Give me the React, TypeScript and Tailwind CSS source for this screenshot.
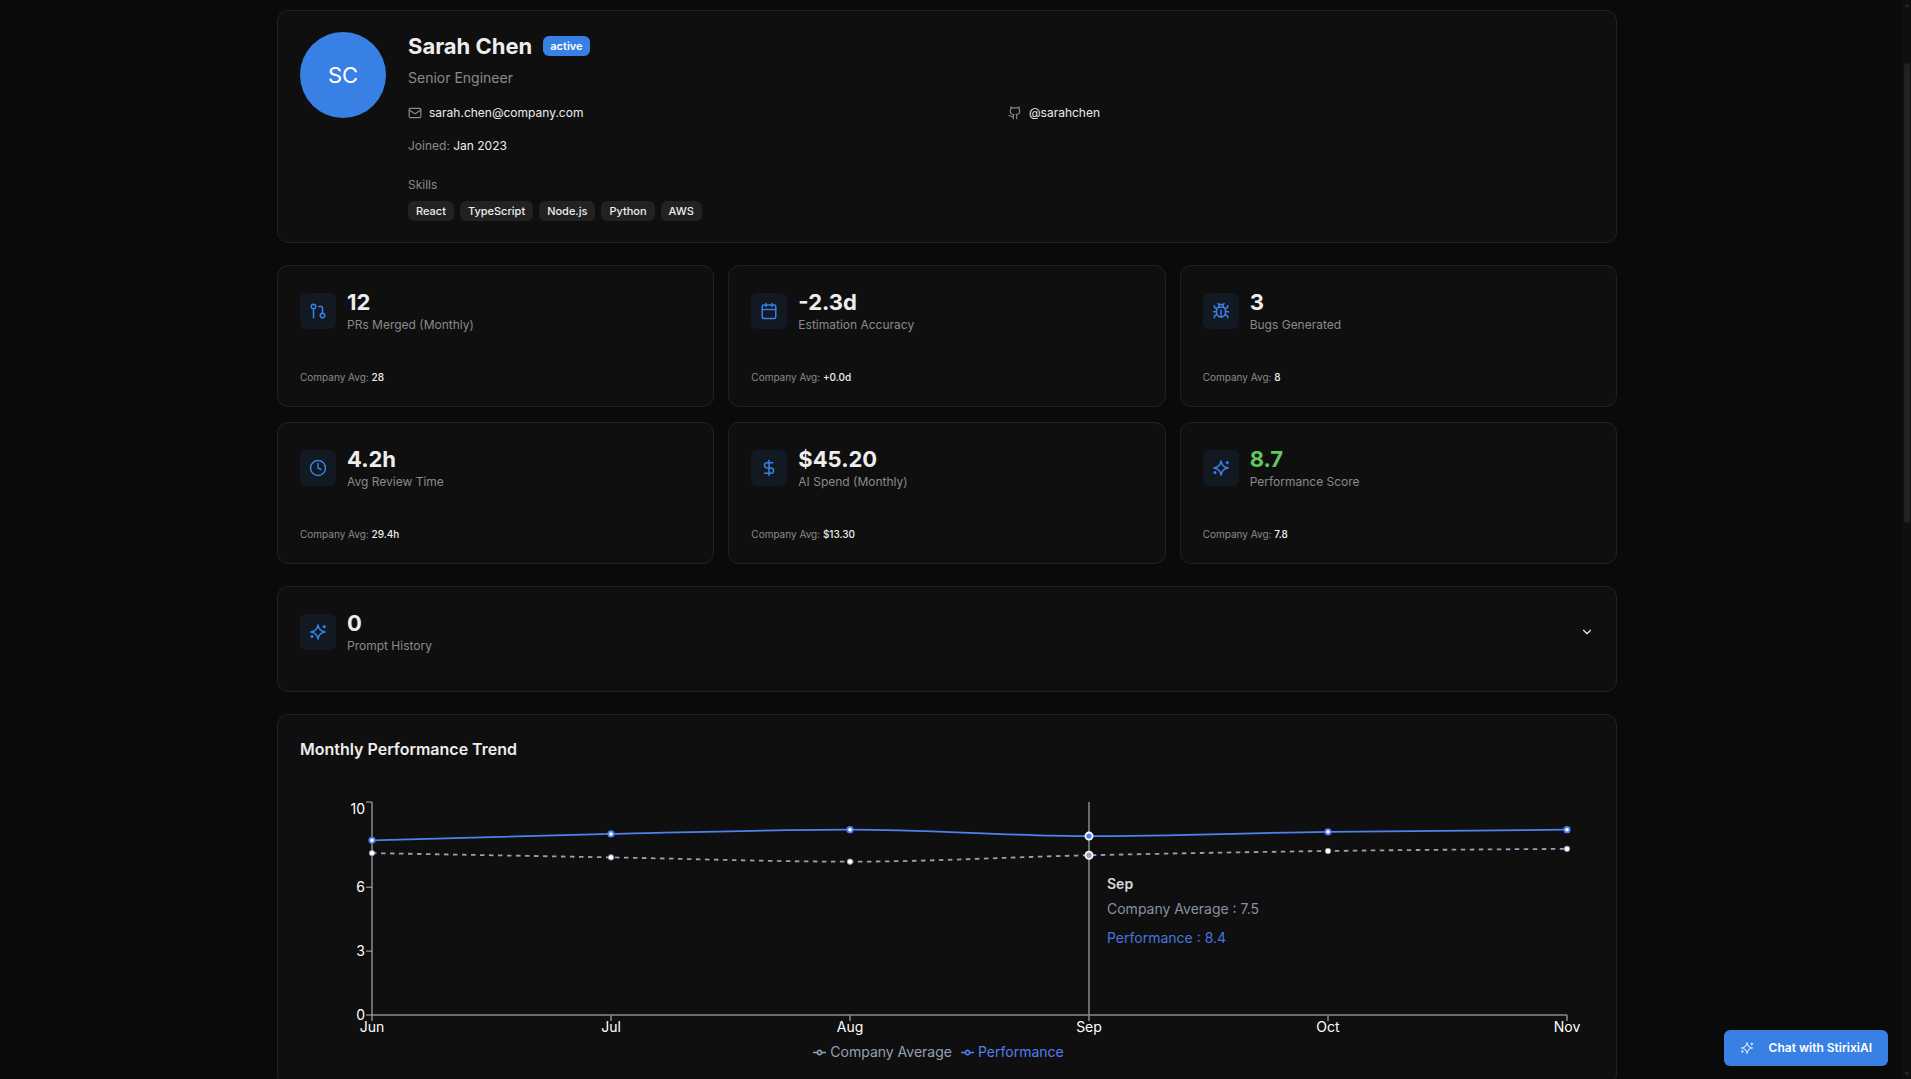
import { useLayoutEffect, useRef, useState } from "react";
import {
  Bug,
  Calendar,
  ChevronDown,
  Clock,
  DollarSign,
  GitPullRequest,
  Github,
  Mail,
} from "lucide-react";

const skills = ["React", "TypeScript", "Node.js", "Python", "AWS"];

const months = ["Jun", "Jul", "Aug", "Sep", "Oct", "Nov"];
const performance = [8.2, 8.5, 8.7, 8.4, 8.6, 8.7];
const company = [7.6, 7.4, 7.2, 7.5, 7.7, 7.8];

function Sparkle({ className }: { className?: string }) {
  return (
    <svg
      viewBox="0 0 24 24"
      fill="none"
      stroke="currentColor"
      strokeWidth={2}
      strokeLinecap="round"
      strokeLinejoin="round"
      className={className}
    >
      <path d="M12 2.5 C12.8 8.5 15.5 11.2 21.5 12 C15.5 12.8 12.8 15.5 12 21.5 C11.2 15.5 8.5 12.8 2.5 12 C8.5 11.2 11.2 8.5 12 2.5Z" />
      <path d="M20.3 3.4v3M21.8 4.9h-3" />
      <circle cx="4" cy="18" r="1" />
    </svg>
  );
}

const stats = [
  { icon: GitPullRequest, value: "12", label: "PRs Merged (Monthly)", avg: "28" },
  { icon: Calendar, value: "-2.3d", label: "Estimation Accuracy", avg: "+0.0d" },
  { icon: Bug, value: "3", label: "Bugs Generated", avg: "8" },
  { icon: Clock, value: "4.2h", label: "Avg Review Time", avg: "29.4h" },
  { icon: DollarSign, value: "$45.20", label: "AI Spend (Monthly)", avg: "$13.30" },
  { icon: Sparkle, value: "8.7", label: "Performance Score", avg: "7.8", good: true },
];

function StatHead({ icon: Icon, value, label, good }: any) {
  return (
    <div className="flex items-center gap-[11px]">
      <div className="flex size-9 items-center justify-center rounded-md bg-[#121922] text-[#3880e4]">
        <Icon className="size-[18px]" />
      </div>
      <div>
        <div
          className={
            good
              ? "text-[22px] leading-7 font-bold text-[#5fc95f]"
              : "text-[22px] leading-7 font-bold"
          }
        >
          {value}
        </div>
        <div className="text-[12px] leading-[18px] text-[#8a8a8a]">{label}</div>
      </div>
    </div>
  );
}

// monotone cubic curve through the points
function curve(pts: number[][]) {
  const n = pts.length;
  const d: number[] = [];
  for (let i = 0; i < n - 1; i++) {
    d.push((pts[i + 1][1] - pts[i][1]) / (pts[i + 1][0] - pts[i][0]));
  }
  const m: number[] = [];
  for (let i = 1; i < n - 1; i++) {
    const s = Math.sign(d[i - 1]) + Math.sign(d[i]);
    m[i] =
      s * Math.min(Math.abs(d[i - 1]), Math.abs(d[i]), Math.abs(d[i - 1] + d[i]) / 4) || 0;
  }
  m[0] = (3 * d[0] - m[1]) / 2;
  m[n - 1] = (3 * d[n - 2] - m[n - 2]) / 2;
  let path = `M${pts[0][0]},${pts[0][1]}`;
  for (let i = 0; i < n - 1; i++) {
    const [x0, y0] = pts[i];
    const [x1, y1] = pts[i + 1];
    const h = (x1 - x0) / 3;
    path += `C${x0 + h},${y0 + h * m[i]} ${x1 - h},${y1 - h * m[i + 1]} ${x1},${y1}`;
  }
  return path;
}

function TrendChart() {
  const box = useRef<HTMLDivElement>(null);
  const [width, setWidth] = useState(1294);
  const active = 3;

  useLayoutEffect(() => {
    const el = box.current;
    if (!el) return;
    const measure = () => setWidth(el.clientWidth);
    measure();
    const ro = new ResizeObserver(measure);
    ro.observe(el);
    return () => ro.disconnect();
  }, []);

  const left = 72;
  const right = width - 27;
  const top = 5;
  const bottom = 218;
  const x = (i: number) => left + ((right - left) * i) / (months.length - 1);
  const y = (v: number) => bottom - ((bottom - top) * v) / 10;
  const perfPts = performance.map((v, i) => [x(i), y(v)]);
  const compPts = company.map((v, i) => [x(i), y(v)]);

  return (
    <div ref={box} className="relative">
      <svg width={width} height={244} className="block text-[14px]">
        <g stroke="#8a8a8a" strokeWidth={1.5}>
          <path d={`M${left},${top}V${bottom}H${right}`} fill="none" />
          {months.map((m, i) => (
            <path key={m} d={`M${x(i)},${bottom}v6`} />
          ))}
          {[0, 3, 6, 10].map((v) => (
            <path key={v} d={`M${left - 6},${y(v)}h6`} stroke="#b5b5b5" strokeWidth={1} />
          ))}
          <path d={`M${x(active)},${top}V${bottom}`} />
        </g>
        <g fill="#fff" textAnchor="end">
          {[0, 3, 6, 10].map((v) => (
            <text key={v} x={left - 7} y={v === 10 ? y(v) + 12 : y(v) + 5}>
              {v}
            </text>
          ))}
        </g>
        <g fill="#fff" textAnchor="middle">
          {months.map((m, i) => (
            <text key={m} x={x(i)} y={bottom + 17}>
              {m}
            </text>
          ))}
        </g>
        <path d={curve(compPts)} fill="none" stroke="#94a3b8" strokeWidth={1.8} strokeDasharray="4.5 4.5" />
        <path d={curve(perfPts)} fill="none" stroke="#4f80f0" strokeWidth={1.8} />
        {compPts.map(([cx, cy], i) => (
          <circle key={i} cx={cx} cy={cy} r={2.7} fill="#fff" stroke="#94a3b8" strokeWidth={1} />
        ))}
        {perfPts.map(([cx, cy], i) => (
          <circle key={i} cx={cx} cy={cy} r={2.7} fill="#fff" stroke="#4f80f0" strokeWidth={1.8} />
        ))}
        <circle cx={x(active)} cy={y(company[active])} r={3.6} fill="#94a3b8" stroke="#fff" strokeWidth={1.8} />
        <circle cx={x(active)} cy={y(performance[active])} r={3.6} fill="#4f80f0" stroke="#fff" strokeWidth={1.8} />
      </svg>
      <div
        className="absolute top-[76px] text-[14px] leading-[22px] text-[#94a0b4] opacity-90"
        style={{ left: x(active) + 18 }}
      >
        <p className="font-semibold text-[#ededed]">{months[active]}</p>
        <ul className="mt-[3px] flex flex-col gap-[7px]">
          <li>Company Average : {company[active]}</li>
          <li className="text-[#4f80f0]">Performance : {performance[active]}</li>
        </ul>
      </div>
      <ul className="flex justify-center gap-[9px] pr-[17px] text-[14px] leading-[22px]">
        <li className="flex items-center gap-1 text-[#94a0b4]">
          <LegendMark />
          Company Average
        </li>
        <li className="flex items-center gap-1 text-[#4f80f0]">
          <LegendMark />
          Performance
        </li>
      </ul>
    </div>
  );
}

function LegendMark() {
  return (
    <svg viewBox="0 0 32 32" className="size-[13px]" fill="none" stroke="currentColor" strokeWidth={4}>
      <path d="M0,16h10.7A5.3,5.3,0,1,1,21.3,16H32M21.3,16A5.3,5.3,0,1,1,10.7,16" />
    </svg>
  );
}

export default function App() {
  const [open, setOpen] = useState(false);

  return (
    <div className="flex h-screen bg-[#0a0a0a] font-['Inter',sans-serif] text-[#ededed]">
      <main className="flex-1 overflow-hidden pt-[10px] pr-2">
        <div className="mx-auto flex max-w-[1340px] flex-col gap-[22px]">
          <section className="flex gap-[22px] rounded-[11px] border border-[#222222] bg-[#0f0f0f] px-[22px] py-[21px]">
            <div className="flex size-[86px] shrink-0 items-center justify-center rounded-full bg-[#3880e4] text-[22px] text-white">
              SC
            </div>
            <div className="flex-1">
              <div className="flex items-center gap-[11px]">
                <h1 className="text-[22px] leading-7 font-bold">Sarah Chen</h1>
                <span className="rounded-md bg-[#3880e4] px-[7px] text-[11px] leading-5 font-semibold text-white">
                  active
                </span>
              </div>
              <p className="mt-[5px] text-[14px] leading-[26px] text-[#8a8a8a]">Senior Engineer</p>
              <div className="mt-[13px] grid grid-cols-2 gap-x-[14px] gap-y-[15px] text-[12px] leading-[18px]">
                <div className="flex items-center gap-[7px]">
                  <Mail className="size-[14px] text-[#8a8a8a]" />
                  <span>sarah.chen@company.com</span>
                </div>
                <div className="flex items-center gap-[7px]">
                  <Github className="size-[14px] text-[#8a8a8a]" />
                  <span>@sarahchen</span>
                </div>
                <div>
                  <span className="text-[#8a8a8a]">Joined:</span> Jan 2023
                </div>
              </div>
              <p className="mt-[21px] text-[12px] leading-[18px] text-[#8a8a8a]">Skills</p>
              <div className="mt-[7px] flex gap-[6px]">
                {skills.map((s) => (
                  <span key={s} className="rounded-md bg-[#222222] px-2 text-[11px] leading-5 font-medium">
                    {s}
                  </span>
                ))}
              </div>
            </div>
          </section>

          <section className="grid grid-cols-3 gap-x-[14px] gap-y-[15px]">
            {stats.map((s) => (
              <div key={s.label} className="rounded-[11px] border border-[#222222] bg-[#0f0f0f] p-[22px] pb-[21px]">
                <StatHead {...s} />
                <p className="mt-[35px] text-[10px] leading-4 text-[#8a8a8a]">
                  Company Avg: <span className="font-medium text-[#ededed]">{s.avg}</span>
                </p>
              </div>
            ))}
          </section>

          <section className="flex items-start justify-between rounded-[11px] border border-[#222222] bg-[#0f0f0f] p-[22px] pb-9">
            <StatHead icon={Sparkle} value="0" label="Prompt History" />
            <button
              aria-label="Toggle prompt history"
              aria-expanded={open}
              className="flex h-[46px] w-[14px] items-center"
              onClick={() => setOpen(!open)}
            >
              <ChevronDown className="size-[14px]" />
            </button>
          </section>

          <section className="rounded-[11px] border border-[#222222] bg-[#0f0f0f] p-[22px]">
            <h2 className="mb-9 text-[16px] leading-6 font-semibold">Monthly Performance Trend</h2>
            <TrendChart />
          </section>
        </div>
      </main>

      <div className="flex w-[9px] flex-col items-center bg-[#0f0f0f] py-[3px]">
        <svg viewBox="0 0 6 4" className="h-1 w-[6px]" fill="#222222">
          <path d="M3 0L6 4H0Z" />
        </svg>
        <div className="mt-14 h-[460px] w-[6px] rounded-full bg-[#222222]" />
        <svg viewBox="0 0 6 4" className="mt-auto h-1 w-[6px]" fill="#222222">
          <path d="M3 4L6 0H0Z" />
        </svg>
      </div>

      <button className="fixed right-[23px] bottom-[13px] flex h-9 items-center gap-[15px] rounded-md bg-[#3880e4] px-4 text-[12px] font-semibold text-white">
        <Sparkle className="size-[14px] opacity-80" />
        Chat with StirixiAI
      </button>
    </div>
  );
}
